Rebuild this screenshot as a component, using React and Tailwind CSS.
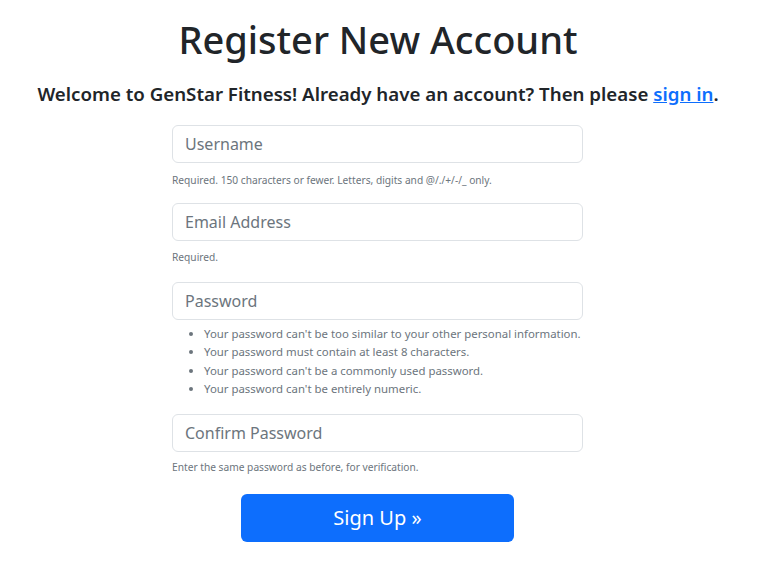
export default function App() {
  const font = { fontFamily: '"Noto Sans", "Open Sans", sans-serif' }
  const inputCls =
    'w-full h-[38px] px-3 border border-[#dee2e6] rounded-md text-[16px] text-[#212529] placeholder-[#6c757d] bg-white focus:outline-none'

  return (
    <div className="min-h-screen bg-white text-[#212529]" style={font}>
      <div className="flex flex-col items-center pt-[15px]">
        <h1 className="text-[38px] leading-[48px] font-medium ml-[-10px]">Register New Account</h1>
        <p className="mt-[19px] text-[18.7px] leading-[24px] font-semibold ml-[-10px]">
          Welcome to GenStar Fitness! Already have an account? Then please{' '}
          <a href="#" className="text-[#0d6efd] underline">sign in</a>.
        </p>

        <form className="w-[411px] mt-[19px] ml-[-11px]">
          <input className={inputCls} placeholder="Username" />
          <p className="mt-[10px] text-[10.2px] leading-[14px] text-[#6c757d]">
            Required. 150 characters or fewer. Letters, digits and @/./+/-/_ only.
          </p>

          <input className={`${inputCls} mt-[16px]`} placeholder="Email Address" />
          <p className="mt-[9px] text-[10.2px] leading-[14px] text-[#6c757d]">Required.</p>

          <input className={`${inputCls} mt-[18px]`} placeholder="Password" />
          <ul className="mt-[5px] pl-[32px] list-disc text-[11.4px] leading-[18.4px] text-[#6c757d]">
            <li>Your password can't be too similar to your other personal information.</li>
            <li>Your password must contain at least 8 characters.</li>
            <li>Your password can't be a commonly used password.</li>
            <li>Your password can't be entirely numeric.</li>
          </ul>

          <input className={`${inputCls} mt-[15px]`} placeholder="Confirm Password" />
          <p className="mt-[8px] text-[10.2px] leading-[14px] text-[#6c757d]">
            Enter the same password as before, for verification.
          </p>

          <div className="flex justify-center mt-[20px]">
            <button
              type="button"
              className="w-[273px] h-[48px] bg-[#0d6efd] text-white text-[20px] rounded-md"
            >
              Sign Up »
            </button>
          </div>
        </form>
      </div>
    </div>
  )
}
